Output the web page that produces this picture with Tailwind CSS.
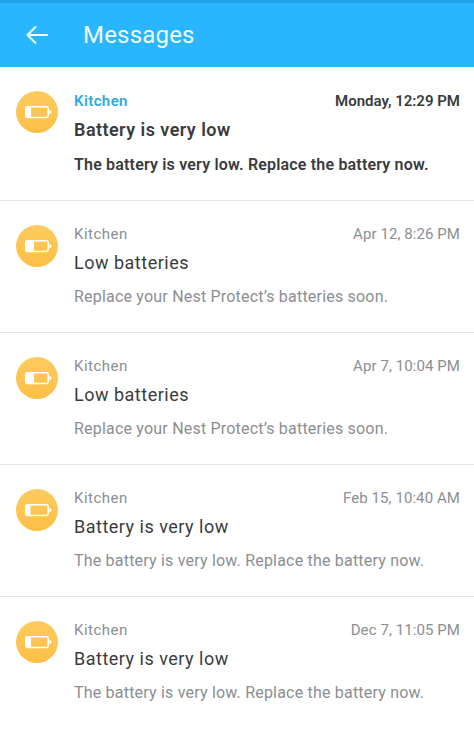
<!DOCTYPE html>
<html lang="en">
<head>
    <meta charset="UTF-8">
    <meta name="viewport" content="width=device-width, initial-scale=1.0">
    <title>Messages</title>
    <script src="https://cdn.jsdelivr.net/npm/@tailwindcss/browser@4"></script>
</head>
<body class="bg-white font-[Roboto,sans-serif] text-[#3a3b3d] h-[729px] overflow-hidden">
    <!-- Shared battery outline -->
    <svg class="hidden">
        <symbol id="battery" viewBox="0 0 42 42">
            <rect x="9.8" y="15.8" width="22.4" height="10.6" rx="1.6" fill="none" stroke="#fff" stroke-width="1.5" />
            <path d="M33.4 19c1.3 0 2 .9 2 2.1s-.7 2.1-2 2.1z" fill="#fff" />
        </symbol>
    </svg>

    <!-- Header -->
    <header class="h-[67px] bg-[#29b6ff] border-t-3 border-[#22a2e6] flex items-center pl-[26px] pb-px">
        <svg class="w-[23px] h-5 mt-px" viewBox="0 0 23 20" fill="none" stroke="#effaff" stroke-width="2.1" stroke-linecap="round" stroke-linejoin="round">
            <path d="M9.5 2L1.5 10l8 8M1.5 10H21" />
        </svg>
        <h1 class="text-2xl text-[#effaff] tracking-[0.2px] ml-[34px]">Messages</h1>
    </header>

    <main>
        <!-- Unread -->
        <article class="h-[134px] border-b border-[#e6e6e7] flex pl-4 pr-[14px]">
            <svg class="size-[42px] mt-6 shrink-0 rounded-full bg-linear-to-b from-[#fdcb5e] to-[#fcbf45]" viewBox="0 0 42 42">
                <use href="#battery" />
                <rect x="9.5" y="15.5" width="5.5" height="11" fill="#fff" />
            </svg>
            <div class="ml-4 grow pt-6 font-semibold">
                <div class="flex justify-between text-[15px] leading-5">
                    <span class="text-[#2fabe2] tracking-[0.4px]">Kitchen</span>
                    <time>Monday, 12:29 PM</time>
                </div>
                <h2 class="text-lg leading-6 mt-[7px] tracking-[0.45px]">Battery is very low</h2>
                <p class="text-base leading-6 mt-[11px] tracking-[0.18px] whitespace-nowrap">The battery is very low. Replace the battery now.</p>
            </div>
        </article>

        <!-- Read -->
        <article class="h-[132px] border-b border-[#e6e6e7] flex pl-4 pr-[14px]">
            <svg class="size-[42px] mt-6 shrink-0 rounded-full bg-linear-to-b from-[#fdcb5e] to-[#fcbf45]" viewBox="0 0 42 42">
                <use href="#battery" />
                <rect x="9.5" y="15.5" width="8.5" height="11" fill="#fff" />
            </svg>
            <div class="ml-4 grow pt-[23px]">
                <div class="flex justify-between text-[15px] leading-5 text-[#8b8e92]">
                    <span class="tracking-[0.5px]">Kitchen</span>
                    <time class="tracking-[0.08px]">Apr 12, 8:26 PM</time>
                </div>
                <h2 class="text-lg leading-6 mt-[7px] tracking-[0.5px]">Low batteries</h2>
                <p class="text-base leading-6 mt-[10px] tracking-[0.2px] whitespace-nowrap text-[#8b8e92]">Replace your Nest Protect’s batteries soon.</p>
            </div>
        </article>

        <article class="h-[132px] border-b border-[#e6e6e7] flex pl-4 pr-[14px]">
            <svg class="size-[42px] mt-6 shrink-0 rounded-full bg-linear-to-b from-[#fdcb5e] to-[#fcbf45]" viewBox="0 0 42 42">
                <use href="#battery" />
                <rect x="9.5" y="15.5" width="8.5" height="11" fill="#fff" />
            </svg>
            <div class="ml-4 grow pt-[23px]">
                <div class="flex justify-between text-[15px] leading-5 text-[#8b8e92]">
                    <span class="tracking-[0.5px]">Kitchen</span>
                    <time class="tracking-[0.08px]">Apr 7, 10:04 PM</time>
                </div>
                <h2 class="text-lg leading-6 mt-[7px] tracking-[0.5px]">Low batteries</h2>
                <p class="text-base leading-6 mt-[10px] tracking-[0.2px] whitespace-nowrap text-[#8b8e92]">Replace your Nest Protect’s batteries soon.</p>
            </div>
        </article>

        <article class="h-[132px] border-b border-[#e6e6e7] flex pl-4 pr-[14px]">
            <svg class="size-[42px] mt-6 shrink-0 rounded-full bg-linear-to-b from-[#fdcb5e] to-[#fcbf45]" viewBox="0 0 42 42">
                <use href="#battery" />
                <rect x="9.5" y="15.5" width="5" height="11" fill="#fff" />
            </svg>
            <div class="ml-4 grow pt-[23px]">
                <div class="flex justify-between text-[15px] leading-5 text-[#8b8e92]">
                    <span class="tracking-[0.5px]">Kitchen</span>
                    <time class="tracking-[0.08px]">Feb 15, 10:40 AM</time>
                </div>
                <h2 class="text-lg leading-6 mt-[7px] tracking-[0.5px]">Battery is very low</h2>
                <p class="text-base leading-6 mt-[10px] tracking-[0.2px] whitespace-nowrap text-[#8b8e92]">The battery is very low. Replace the battery now.</p>
            </div>
        </article>

        <article class="h-[132px] flex pl-4 pr-[14px]">
            <svg class="size-[42px] mt-6 shrink-0 rounded-full bg-linear-to-b from-[#fdcb5e] to-[#fcbf45]" viewBox="0 0 42 42">
                <use href="#battery" />
                <rect x="9.5" y="15.5" width="5.5" height="11" fill="#fff" />
            </svg>
            <div class="ml-4 grow pt-[23px]">
                <div class="flex justify-between text-[15px] leading-5 text-[#8b8e92]">
                    <span class="tracking-[0.5px]">Kitchen</span>
                    <time class="tracking-[0.08px]">Dec 7, 11:05 PM</time>
                </div>
                <h2 class="text-lg leading-6 mt-[7px] tracking-[0.5px]">Battery is very low</h2>
                <p class="text-base leading-6 mt-[10px] tracking-[0.2px] whitespace-nowrap text-[#8b8e92]">The battery is very low. Replace the battery now.</p>
            </div>
        </article>
    </main>
</body>
</html>
